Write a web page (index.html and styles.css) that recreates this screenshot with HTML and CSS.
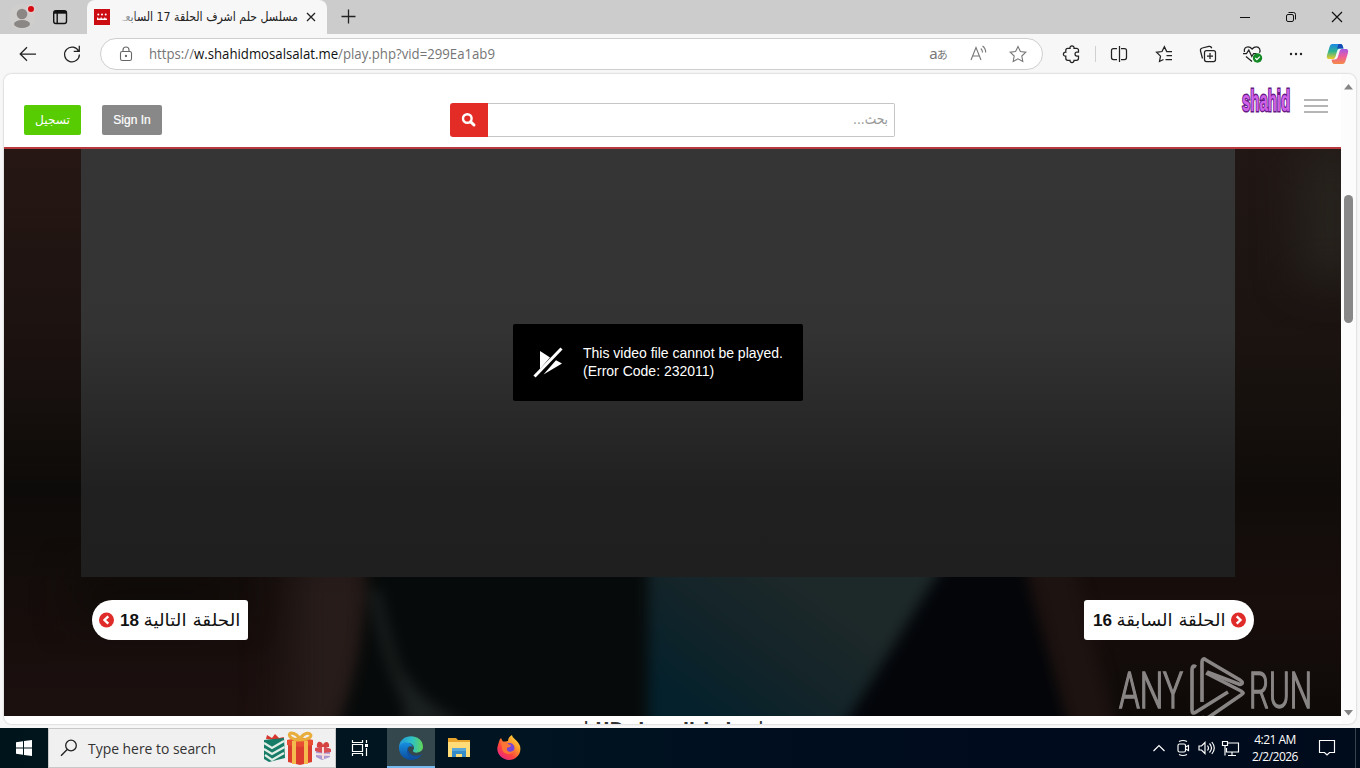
FILE: index.html
```html
<!DOCTYPE html>
<html lang="en">
<head>
<meta charset="utf-8">
<title>مسلسل حلم اشرف الحلقة 17 السابعة</title>
<link rel="stylesheet" href="styles.css">
</head>
<body>
<div class="desktop">
  <header class="tabbar">
    <svg class="avatar" width="44" height="34" viewBox="0 0 44 34"><circle cx="22" cy="17" r="13" fill="#d0cecd"/><circle cx="22" cy="14" r="5.3" fill="#8b8784"/><ellipse cx="22" cy="24" rx="8" ry="4" fill="#8b8784"/><circle cx="31" cy="9" r="4.6" fill="#e2cccc"/><circle cx="31" cy="9" r="3" fill="#d50b12"/></svg>
    <svg class="tab-actions" width="32" height="34" viewBox="0 0 32 34" fill="none" stroke="#111" stroke-width="1.4"><rect x="9.7" y="10.7" width="12.8" height="12.8" rx="2.2"/><path d="M10 12.3h12.3" stroke-width="2.8"/><path d="M13.2 13v10"/></svg>
    <div class="tab">
      <svg class="favicon" width="16" height="16" viewBox="0 0 16 16"><rect width="16" height="16" fill="#cc0d12"/><g fill="#fff"><circle cx="4.300" cy="5.600" r="1"/><circle cx="8" cy="5.600" r="1"/><circle cx="11.700" cy="5.600" r="1"/><path d="M3 8.500h1.200v1h2.400v-1h1.200v1h2.400v-1h1.200v1H13V8.500v2.500H3z"/></g></svg>
      <svg class="tab-title" width="180" height="24" viewBox="0 0 180 24"><defs><linearGradient id="fade"><stop offset="0" stop-color="#f7f7f7"/><stop offset="1" stop-color="#f7f7f7" stop-opacity="0"/></linearGradient></defs><text x="178" y="16" direction="rtl" textLength="176" lengthAdjust="spacingAndGlyphs">مسلسل حلم اشرف الحلقة 17 السابعـ</text><rect width="18" height="24" fill="url(#fade)"/></svg>
      <svg class="tab-close" width="14" height="14" viewBox="0 0 14 14"><path d="M3 3l8 8M11 3l-8 8" stroke="#222" stroke-width="1.300"/></svg>
    </div>
    <svg class="new-tab" width="42" height="34" viewBox="0 0 42 34"><path d="M14.500 16.500h14M21.500 9.500v14" stroke="#222" stroke-width="1.300"/></svg>
    <div class="window-controls">
      <svg width="46" height="34" viewBox="0 0 46 34"><path d="M18 17.500h10" stroke="#111"/></svg>
      <svg width="46" height="34" viewBox="0 0 46 34" fill="none" stroke="#111"><rect x="18.500" y="14.500" width="7" height="7" rx="1.500"/><path d="M20.500 12.500h5a2 2 0 0 1 2 2v5"/></svg>
      <svg width="46" height="34" viewBox="0 0 46 34"><path d="M18 12l10 10M28 12l-10 10" stroke="#111" stroke-width="1.200"/></svg>
    </div>
  </header>

  <nav class="toolbar">
    <svg class="cell44 back" width="44" height="40" viewBox="0 0 44 40"><path d="M20 20h16M27 13.200L20.200 20l6.800 6.800"/></svg>
    <svg class="cell44" width="44" height="40" viewBox="0 0 44 40"><path d="M28.700 17.300a7.400 7.400 0 1 0 .7 3.200M29.300 11.800v5.600h-5.600"/></svg>
    <div class="omnibox">
      <svg class="lock" width="20" height="20" viewBox="0 0 20 20"><rect x="4.500" y="7.500" width="11" height="9" rx="1.800"/><path d="M7 7.500V6a3 3 0 0 1 6 0v1.500"/><circle cx="10" cy="12" r=".6" fill="#666"/></svg>
      <svg class="url" width="500" height="24" viewBox="0 0 500 24"><text x="1" y="17" textLength="346" lengthAdjust="spacingAndGlyphs">https://<tspan class="host">w.shahidmosalsalat.me</tspan>/play.php?vid=299Ea1ab9</text></svg>
      <span class="translate">a<small>あ</small></span>
      <svg class="read" width="40" height="30" viewBox="0 0 40 30"><path d="M13 21l5-12.500 5 12.500M14.800 17h6.500M22.800 9.500c1.200 1 1.700 2.300 1.700 4M24.500 7c2.200 1.500 3.200 3.800 3.200 6.500"/></svg>
      <svg width="40" height="30" viewBox="0 0 40 30"><path d="M20 7.500l2.400 5 5.400.7-4 3.800 1 5.400-4.800-2.600-4.800 2.600 1-5.400-4-3.800 5.400-.7z"/></svg>
    </div>
    <svg class="puzzle" width="40" height="40" viewBox="0 0 40 40"><path d="M15.800 14.300h2.200c-.5-3.200 4.500-3.200 4 0h2.500a2 2 0 0 1 2 2v1.800h-1.600c-2.500 0-2.500 4 0 4h1.600v2.200a2 2 0 0 1-2 2H22c.3 3-4.300 3-4 0h-2.200a2 2 0 0 1-2-2v-2.100c-3.200.3-3.200-4.300 0-4v-1.900a2 2 0 0 1 2-2z"/></svg>
    <span class="divider"></span>
    <svg class="cell44" width="44" height="40" viewBox="0 0 44 40"><path d="M20 14.500h-3.500a2 2 0 0 0-2 2v7a2 2 0 0 0 2 2H20M24 14.500h3.500a2 2 0 0 1 2 2v7a2 2 0 0 1-2 2H24M22.500 12v16"/></svg>
    <svg class="cell44" width="44" height="40" viewBox="0 0 44 40"><path d="M30 17.500h-5.300l-2.300-4.800-2.400 4.800-5.500.8 4 3.800-1 5.400 4-2M24.500 21.500H30M23.500 25.500H30"/></svg>
    <svg class="cell44" width="44" height="40" viewBox="0 0 44 40"><rect x="18.500" y="16.500" width="11" height="11" rx="2"/><path d="M24 19v6M21 22h6M16.500 24.500l-2-7.500c-.3-1.600.3-2.700 1.800-3l6.500-1.600c1.500-.3 2.500.2 3 1.900"/></svg>
    <svg class="cell44" width="44" height="40" viewBox="0 0 44 40"><path d="M14.500 18c-1-3.500 1.200-5.200 3.500-5.200 2 0 3.100 1 4.100 2.200 1-1.200 2.300-2.200 4.300-2.200 3 0 4.500 3 3.100 6M13 19.500h3.500l2.300-3.500 3 6.500 1.800-3h3M16 22.500l6 5"/><circle cx="27.500" cy="24" r="4.700" fill="#138a26" stroke="none"/><path d="M25.300 24l1.600 1.600 2.900-3" stroke="#fff"/></svg>
    <svg class="cell44" width="44" height="40" viewBox="0 0 44 40"><g fill="#222" stroke="none"><circle cx="17" cy="20" r="1.200"/><circle cx="22" cy="20" r="1.200"/><circle cx="27" cy="20" r="1.200"/></g></svg>
    <svg class="copilot" width="40" height="40" viewBox="0 0 40 40"><defs><linearGradient id="cp1" x2="0" y2="1"><stop stop-color="#1987e8"/><stop offset=".5" stop-color="#32b58f"/><stop offset="1" stop-color="#f0cc28"/></linearGradient><linearGradient id="cp2" x2="0" y2="1"><stop stop-color="#a557e5"/><stop offset=".5" stop-color="#ed5d9b"/><stop offset="1" stop-color="#f58b45"/></linearGradient></defs><g stroke="none"><path d="M14.500 10h8c2 0 2.500 2 3 4.500h-3c-2 0-3 1-3.500 3l-1.500 5c-.6 2-1.500 2.500-3 2.500h-3c-3 0-3-2-2.300-4.500l2.300-7.500c.6-2 1.500-3 3-3z" fill="url(#cp1)"/><path d="M24.500 30h-8c-2 0-2.500-2-3-4.500h3c2 0 3-1 3.500-3l1.500-5c.6-2 1.500-2.500 3-2.500h3c3 0 3 2 2.300 4.500L27.500 27c-.6 2-1.500 3-3 3z" fill="url(#cp2)"/><path d="M19 14.500h6.500l-1-2.500c-.4-1.500-1-2-2-2h-2z" fill="#164ab6"/></g></svg>
  </nav>

  <main class="frame">
    <div class="page">
      <div class="site-header">
        <div class="account">
          <button class="btn register"><svg width="39" height="24" viewBox="0 0 39 24"><text x="37" y="16" direction="rtl" textLength="35" lengthAdjust="spacingAndGlyphs">تسجيل</text></svg></button>
          <button class="btn signin">Sign In</button>
        </div>
        <div class="search">
          <span class="search-btn"><svg width="16" height="16" viewBox="0 0 16 16"><circle cx="6.300" cy="6.500" r="4.300" fill="none" stroke="#fff" stroke-width="2.400"/><path d="M9.700 9.800l3.300 3.200" stroke="#fff" stroke-width="3" stroke-linecap="round"/></svg></span>
          <div class="search-input"><svg width="42" height="28" viewBox="0 0 42 28"><text x="40" y="18" direction="rtl" textLength="35" lengthAdjust="spacingAndGlyphs">بحث...</text></svg></div>
        </div>
        <div class="brand">
          <svg width="52" height="34" viewBox="0 0 52 34"><text class="logo" x="2" y="24.500" textLength="48" lengthAdjust="spacingAndGlyphs">shahid</text></svg>
          <div class="burger"><i></i><i></i><i></i></div>
        </div>
      </div>

      <div class="stage">
        <svg class="backdrop" width="1337" height="567" viewBox="4 149 1337 567" preserveAspectRatio="none">
          <defs>
            <filter id="b6" x="-30%" y="-30%" width="160%" height="160%" color-interpolation-filters="sRGB"><feGaussianBlur stdDeviation="7"/></filter>
            <filter id="b20" x="-100%" y="-100%" width="300%" height="300%" color-interpolation-filters="sRGB"><feGaussianBlur stdDeviation="22"/></filter>
            <linearGradient id="sideL" x2="0" y2="1"><stop stop-color="#261714"/><stop offset=".35" stop-color="#1b1210"/><stop offset=".6" stop-color="#0d0b09"/><stop offset=".8" stop-color="#150d0b"/><stop offset="1" stop-color="#1c100f"/></linearGradient>
            <linearGradient id="sideR" x2="0" y2="1"><stop stop-color="#211815"/><stop offset=".35" stop-color="#1a1310"/><stop offset=".6" stop-color="#100c0a"/><stop offset=".8" stop-color="#180e0c"/><stop offset="1" stop-color="#0e0a08"/></linearGradient>
            <linearGradient id="teal" gradientUnits="userSpaceOnUse" x1="800" y1="580" x2="700" y2="716"><stop stop-color="#1d2829"/><stop offset=".5" stop-color="#132429"/><stop offset="1" stop-color="#04212c"/></linearGradient>
          </defs>
          <rect x="4" y="149" width="700" height="567" fill="url(#sideL)"/>
          <rect x="704" y="149" width="637" height="567" fill="url(#sideR)"/>
          <rect x="1300" y="150" width="60" height="130" fill="#27231e" filter="url(#b20)"/>
          <rect x="80" y="577" width="150" height="40" fill="#0d0a07" filter="url(#b20)"/>
          <rect x="290" y="550" width="90" height="210" fill="#281d1b" filter="url(#b20)"/>
          <g filter="url(#b6)">
            <path d="M369 540H670V760H320Q368 680 369 540z" fill="#070a0a"/>
            <path d="M374 590Q390 670 416 716" fill="none" stroke="#1b2120" stroke-width="10"/>
            <path d="M404 670Q420 705 470 725H405z" fill="#1b2020"/>
            <path d="M648 550H955L835 740H648z" fill="url(#teal)"/>
            <path d="M953 550H1018L1070 740H835z" fill="#030509"/>
            <path d="M1024 550H1070L1120 740H1072z" fill="#1d1311"/>
          </g>
        </svg>
        <div class="stage-content">
          <section class="player">
            <div class="error">
              <svg width="34" height="34" viewBox="0 0 34 34"><path d="M9 5l7 4.500 3 2L9 23z" fill="#fff"/><path d="M12.500 28.500L31 17.500l-6-3.300z" fill="#fff"/><path d="M30.500 2.500L3.500 30.500" stroke="#fff" stroke-width="3"/></svg>
              <p>This video file cannot be played.<br>(Error Code: 232011)</p>
            </div>
          </section>
          <div class="episodes">
            <a class="ep next"><svg class="dot" width="15" height="16" viewBox="0 0 15 16"><circle cx="7.500" cy="8" r="7.500" fill="#df2c2b"/><path d="M9.300 4.300L5.500 8l3.800 3.700" fill="none" stroke="#fff" stroke-width="2.400"/></svg><svg width="122" height="34" viewBox="0 0 122 34"><text class="num" x="0" y="23" textLength="19" lengthAdjust="spacingAndGlyphs">18</text><text x="120.500" y="23" direction="rtl" textLength="97" lengthAdjust="spacingAndGlyphs">الحلقة التالية</text></svg></a>
            <a class="ep prev"><svg width="134" height="34" viewBox="0 0 134 34"><text class="num" x="0" y="23" textLength="19" lengthAdjust="spacingAndGlyphs">16</text><text x="132.500" y="23" direction="rtl" textLength="109" lengthAdjust="spacingAndGlyphs">الحلقة السابقة</text></svg><svg class="dot" width="15" height="16" viewBox="0 0 15 16"><circle cx="7.500" cy="8" r="7.500" fill="#df2c2b"/><path d="M5.700 4.300L9.500 8l-3.800 3.700" fill="none" stroke="#fff" stroke-width="2.400"/></svg></a>
          </div>
        </div>
      </div>
      <div class="below"><svg width="184" height="30" viewBox="0 0 184 30"><text x="182" y="18.500" direction="rtl" textLength="181" lengthAdjust="spacingAndGlyphs">| روابط التحميل HD |</text></svg></div>
    </div>
    <aside class="scroll">
      <svg width="9" height="6" viewBox="0 0 9 6"><path d="M4.500 0L9 5.500H0z" fill="#858585"/></svg>
      <span class="thumb"></span>
      <svg class="down" width="9" height="6" viewBox="0 0 9 6"><path d="M4.500 5.500L9 0H0z" fill="#858585"/></svg>
    </aside>
  </main>

  <svg class="watermark" width="200" height="66" viewBox="1115 656 200 66"><g fill="#fff"><text x="1119" y="707.500" textLength="64" lengthAdjust="spacingAndGlyphs">ANY</text><text x="1249" y="707.500" textLength="63" lengthAdjust="spacingAndGlyphs">RUN</text></g><g fill="none" stroke="#fff" stroke-width="3.600" stroke-linejoin="round"><path d="M1196 667c-3-2-4 0-4 3v40c0 3 1 4 4 2l32-20"/><path d="M1202 702v-40c0-3 2-4 4-2l34 20c3 2 3 4 0 4.500l-33-12.500"/><path d="M1206 673l35 18c3 2 3 2 0 4l-32 22c-3 2-5 1-7 0"/></g></svg>

  <footer class="taskbar">
    <svg class="start" width="48" height="40" viewBox="0 0 48 40" fill="#fff"><path d="M16 14.300l7-1v6.300h-7zM24 13.100l8-1.100v7.600h-8zM16 20.500h7v6.300l-7-1zM24 20.500h8V28l-8-1.100z"/></svg>
    <div class="task-search">
      <svg class="mag" width="20" height="20" viewBox="0 0 20 20"><circle cx="12" cy="7.500" r="5.300" fill="none" stroke="#222" stroke-width="1.300"/><path d="M8.200 11.500L2 17.700" stroke="#222" stroke-width="1.400"/></svg>
      <svg class="hint" width="132" height="24" viewBox="0 0 132 24"><text x="0" y="17.500" textLength="128" lengthAdjust="spacingAndGlyphs">Type here to search</text></svg>
      <svg class="gifts" width="68" height="38" viewBox="0 0 68 38"><path d="M3 10l1-4 5 3 3-4 4 4 5-1-1 4z" fill="#d93630"/><path d="M1 11l20-2 1 20-16 4-5-3z" fill="#167c67"/><path d="M1 14l8 5 12-7M1 20l8 5 12.500-7M2 26l7 5 12-7" fill="none" stroke="#e1eee5" stroke-width="2.200"/><path d="M25 12l12-2 12 2v21l-12 3-12-3z" fill="#dc3c2e"/><path d="M24 11l13-3 13 3v5l-13 2-13-2z" fill="#e84d32"/><path d="M31 12v23M43 12v23" stroke="#f4ba4e" stroke-width="4"/><path d="M37 11c-10 0-13-6-9-7 4 0 8 3 9 7 1-5 7-8 10-6 3 2-1 6-10 6z" fill="none" stroke="#e9ad3c" stroke-width="3"/><path d="M53 20l7-3 7 3v8l-8 3-6-3z" fill="#ad99d2"/><path d="M52 19l8-2 8 3v3l-8 1-8-2z" fill="#d94d55"/><path d="M60 18v12M53 25l14 1" stroke="#f5dedb" stroke-width="2"/><path d="M54 18c-1-7 5-6 6-2 2-5 7-3 6 2z" fill="#d64141"/></svg>
    </div>
    <svg class="taskview" width="50" height="40" viewBox="0 0 50 40" fill="none" stroke="#fff" stroke-width="1.200"><path d="M16.500 12v2.500h10V12M16.500 28v-2.500h10V28M16.500 16.500h10v7h-10zM30.500 12v3M30.500 20v8"/><path d="M30.500 16v3" stroke-width="3"/></svg>
    <div class="app active"><svg width="26" height="26" viewBox="0 0 26 26"><defs><linearGradient id="eg1"><stop stop-color="#2396d8"/><stop offset=".55" stop-color="#2fc1c5"/><stop offset="1" stop-color="#62d656"/></linearGradient><linearGradient id="eg2" x2="0" y2="1"><stop stop-color="#178ee0"/><stop offset="1" stop-color="#0c4b9c"/></linearGradient></defs><path d="M1 13C1-3 25-2 25 12c0 6-9 7-10 4-.5-1 1-1 1-3 0-3-3-5-6-5-5 0-9 4-9 8z" fill="url(#eg1)"/><path d="M1 12c1-5 12-7 14 0-4-2-6 1-5 4 1 5 8 7 13 4-2 3-6 5-10 5C6 25 .5 19 1 12z" fill="url(#eg2)"/><path d="M10 12c-3 6 1 13 9 12 2-1 4-3 5-5-6 4-15 1-14-7z" fill="#114f9f"/></svg></div>
    <div class="app"><svg width="24" height="22" viewBox="0 0 24 22"><path d="M1 3V1h8l2 2h12v17H1z" fill="#e9a52b"/><path d="M1 5h22v15H1z" fill="#ffdc78"/><path d="M5 20v-7h14v7h-4v-3H9v3z" fill="#368cc8"/><path d="M5 11h14v3H5z" fill="#58a7d8"/></svg></div>
    <div class="app fox"><svg width="24" height="26" viewBox="0 0 24 26"><defs><linearGradient id="ff" x1="1" x2=".2" y2="1"><stop stop-color="#fff044"/><stop offset=".4" stop-color="#ff982a"/><stop offset=".7" stop-color="#ff433e"/><stop offset="1" stop-color="#e6238c"/></linearGradient></defs><path d="M4 3l2 4 5-1c0-3 2-5 4-6 0 3 6 5 8 11 2 8-4 14-11 14S-2 18 1 10c1-3 1-5 3-7z" fill="url(#ff)"/><circle cx="12.500" cy="13" r="5" fill="#7945d7"/><path d="M4 7c3-1 6 0 7 2l3 1c0 2-2 2-4 3-1 4 4 5 7 2-2 6-12 5-12-2z" fill="#ff7536"/></svg></div>
    <div class="tray">
      <svg width="24" height="40" viewBox="0 0 24 40"><path d="M6.500 23l5.500-5.500 5.500 5.500"/></svg>
      <svg width="24" height="40" viewBox="0 0 24 40"><rect x="7" y="16" width="7.500" height="8" rx="1.500"/><path d="M14.500 19l3-1.500v5l-3-1.500M8 13.500q4-2 8 0M8 26.500q4 2 8 0"/></svg>
      <svg width="24" height="40" viewBox="0 0 24 40"><path d="M4 18h2.500l3.500-3.500v11L6.500 22H4zM12.500 17.500q2 2.500 0 5M14.500 15.500q4 4.500 0 9M16.800 14q5 6 0 12"/></svg>
      <svg width="24" height="40" viewBox="0 0 24 40"><path d="M9 15h10.500v9H7.500v-4M13 24v3M9 27.500h8M3.500 13.500h5v4h-5zM6 17.500v10"/></svg>
      <div class="clock"><span>4:21 AM</span><span>2/2/2026</span></div>
      <svg class="note" width="28" height="40" viewBox="0 0 28 40"><path d="M6.500 12.500h15v12h-5L14 27l-2.500-2.500h-5z"/></svg>
    </div>
    <span class="peek"></span>
  </footer>
</div>
</body>
</html>
```
FILE: styles.css
```css
* { box-sizing: border-box; }
body { margin: 0; overflow: hidden; font-family: "Liberation Sans", Arial, sans-serif; }
svg { display: block; flex: none; overflow: visible; }
.desktop { position: relative; width: 1360px; height: 768px; display: flex; flex-direction: column; background: #f7f7f7; overflow: hidden; }

.tabbar { height: 34px; display: flex; background: #ccc; }
.tabbar > .tab-actions { margin-right: 11px; }
.tab { width: 240px; height: 34px; padding: 0 9px 0 7px; display: flex; align-items: center; background: #f7f7f7; border-radius: 8px 8px 0 0; }
.tab-title { margin-left: 10px; overflow: hidden; }
.tab-title text { font: 12.5px "DejaVu Sans Condensed", "DejaVu Sans", sans-serif; fill: #222; }
.tab-close { margin-left: 4px; }
.window-controls { display: flex; margin-left: auto; }

.toolbar { height: 40px; display: flex; background: #f7f7f7; }
.toolbar svg { fill: none; stroke: #222; stroke-width: 1.25; }
.toolbar > .back + svg { margin: 0 6px; }
.toolbar > .back { margin-right: 0; }
.omnibox { width: 943px; height: 32px; margin-top: 4px; padding: 0 4px 0 16px; display: flex; align-items: center; background: #fff; border: 1px solid #cecece; border-radius: 16px; }
.toolbar > .back + svg { margin-right: 6px; }
.omnibox svg { stroke: #777; stroke-width: 1.1; }
.omnibox .lock { stroke: #666; margin-left: -1px; }
.url { margin-left: 12px; }
.url text { font: 14px "Open Sans", sans-serif; fill: #757575; stroke: none; }
.url .host { fill: #111; }
.translate { margin-left: auto; margin-top: -3px; width: 40px; text-align: center; font: 15px "Noto Sans", "Noto Sans CJK JP", sans-serif; letter-spacing: -1px; color: #777; }
.translate small { font-size: 11px; }
.puzzle { margin-left: 9px; }
.divider { width: 1px; height: 16px; margin: 12px 1px 0 3px; background: #d0d0d0; }
.divider + .cell44 { margin-right: 1px; }

.frame { height: 650px; margin: 0 4px 4px; display: flex; overflow: hidden; background: #fff; border-radius: 8px; box-shadow: 0 0 2px #aaa; }
.page { width: 1337px; }
.site-header { height: 75px; padding: 0 13px 0 20px; display: flex; align-items: flex-start; background: #fff; border-bottom: 2px solid #b83a3f; }
.account { display: flex; gap: 21px; margin-top: 31px; }
.btn { height: 30px; padding: 0; border: 0; border-radius: 2px; display: flex; align-items: center; justify-content: center; color: #fff; font: 12px "Liberation Sans", Arial, sans-serif; -webkit-text-stroke: .2px #fff; }
.register { width: 57px; background: #58cc02; }
.register text { font: 12px "DejaVu Sans", sans-serif; fill: #fff; }
.signin { width: 60px; background: #888; }
.search { width: 445px; height: 34px; margin: 29px 0 0 288px; display: flex; }
.search-btn { width: 38px; display: flex; align-items: center; justify-content: center; background: #e42c27; border-radius: 3px 0 0 3px; }
.search-input { flex: 1; padding-right: 4px; border: 1px solid #c5c5c5; border-left: 0; border-radius: 0 2px 2px 0; display: flex; align-items: center; justify-content: flex-end; }
.search-input text { font: 14px "DejaVu Sans", sans-serif; fill: #999; }
.brand { margin: 12px 0 0 auto; display: flex; gap: 12px; }
.logo { font: bold 29px "Liberation Sans Narrow", "Liberation Sans", sans-serif; fill: #cf62e8; stroke: #661a86; stroke-width: 2.8px; paint-order: stroke; }
.burger { width: 24px; margin-top: 13px; display: flex; flex-direction: column; gap: 4px; }
.burger i { height: 2px; background: #b5b5b5; }

.stage { display: grid; height: 567px; overflow: hidden; background: #120d0b; }
.backdrop, .stage-content { grid-area: 1 / 1; }
.stage-content { position: relative; width: 1337px; }
.player { width: 1154px; height: 428px; margin-left: 77px; padding-top: 175px; display: flex; align-items: flex-start; justify-content: center; background: linear-gradient(#353535 0, #333 42%, #202020 80%, #1f1f1f); }
.error { width: 290px; height: 77px; padding: 0 18px; display: flex; align-items: center; gap: 18px; background: #000; border-radius: 2px; color: #fff; }
.error p { margin: 0 0 2px; font-size: 14px; line-height: 18px; white-space: nowrap; }
.episodes { display: flex; justify-content: space-between; padding: 23px 87px 0 88px; }
.ep { height: 40px; display: flex; align-items: center; gap: 5px; background: #fff; }
.ep text { font: 17px "DejaVu Sans Condensed", "DejaVu Sans", sans-serif; fill: #111; }
.ep .num { font: bold 17px "Liberation Sans", Arial, sans-serif; }
.next { width: 156px; padding-left: 7px; gap: 6px; border-radius: 20px 3px 3px 20px; }
.prev { width: 170px; padding-left: 9px; gap: 4px; border-radius: 3px 20px 20px 3px; }
.below { height: 8px; overflow: hidden; padding-left: 578px; background: #fff; }
.below text { font: bold 17px "DejaVu Sans", sans-serif; fill: #333; }
.scroll { width: 15px; padding: 10px 0 8px 3px; display: flex; flex-direction: column; background: #fcfcfc; }
.thumb { width: 9px; height: 128px; margin-top: 105px; border-radius: 5px; background: #888; }
.scroll .down { margin-top: auto; }

.watermark { position: absolute; left: 1115px; top: 656px; opacity: .5; }
.watermark text { font: 300 50px Roboto, sans-serif; stroke: #fff; stroke-width: 1.5px; }

.taskbar { height: 40px; display: flex; background: linear-gradient(90deg, #00151b, #001521 35%, #000d1f 60%, #000b1c); }
.task-search { width: 288px; height: 40px; padding-left: 10px; display: flex; align-items: center; background: #f0f0f0; border: 1px solid #c8c8c8; }
.hint { margin-left: 9px; }
.hint text { font: 15px "Open Sans", sans-serif; fill: #333; }
.gifts { margin-left: 43px; }
.taskview { margin-right: 1px; }
.app { width: 48px; height: 40px; display: flex; align-items: center; justify-content: center; }
.active { background: #34474d; border-bottom: 2px solid #76b9ed; padding-top: 2px; }
.fox { margin-left: 2px; }
.tray { margin-left: auto; display: flex; }
.tray svg { fill: none; stroke: #fff; stroke-width: 1.15; }
.clock { width: 64px; display: flex; flex-direction: column; align-items: center; padding-top: 3px; color: #fff; font: 12px/17px "Open Sans", sans-serif; letter-spacing: -.5px; }
.tray .note { margin: 0 14px 0 6px; }
.peek { width: 1px; margin-right: 4px; background: #39424f; }
```
